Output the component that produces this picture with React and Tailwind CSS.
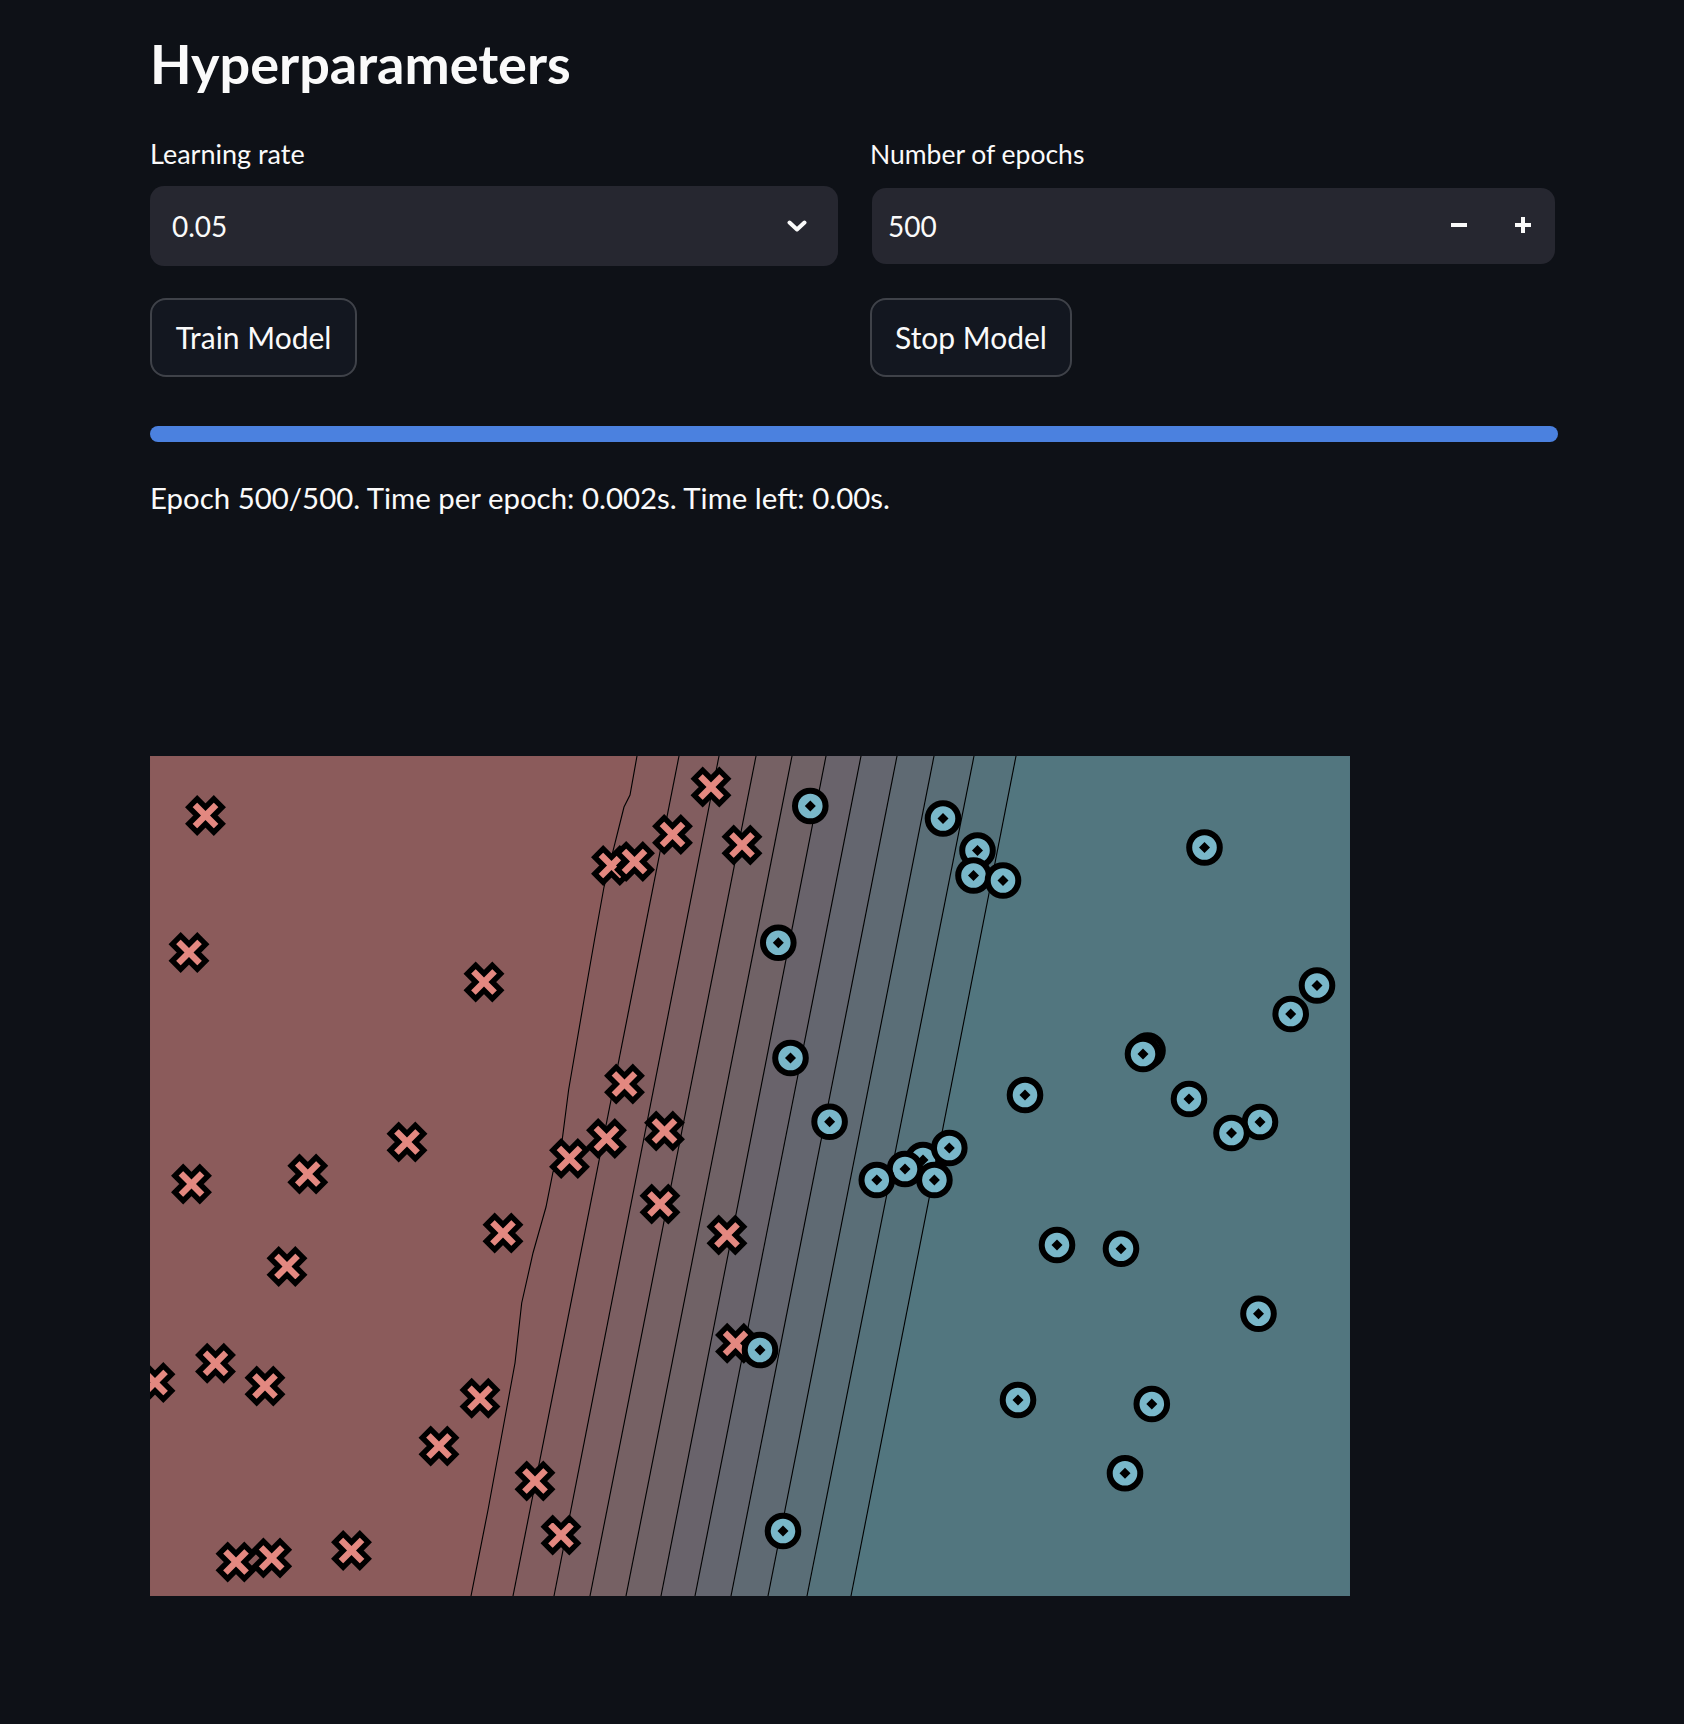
import React from "react";

const L1 = [[487,0],[480,39],[474,51],[454,131],[445,181],[434,244],[418.6,334],[409.6,404],[403,416],[396,451],[383,497],[371.7,547],[365,607],[354,667],[338,754],[321,840]];
const straight = [[529,363],[569,404],[606,440],[642,476],[676,511],[711,545],[747,581],[784,618],[824,657],[866,701]];
const LINES = [L1, ...straight.map(([t,b]) => [[t,0],[b,840]])];
const BAND = ['#8b5b5b','#875c5d','#825d5f','#7c5f62','#766164','#706266','#69636b','#64666f','#5f6a73','#5a6e77','#55727b','#52767f'];

const XS = [[55.5,59.5],[39,196.5],[334,226],[561,31],[522.5,78.5],[592,89],[461.5,109.5],[484.5,105.5],[474.5,328],[514.5,375],[456.5,382.5],[419.5,402.5],[257,386],[157.8,418],[41.5,428],[353,477],[510,448],[577,479],[137,510.5],[65.5,607.3],[115,630],[5,626.5],[330,642.3],[289,690],[385,725],[411,779],[585.5,587.3],[86,806],[121.7,802],[201.5,794.5]];
const OS = [[660.3,50],[793,62.5],[827.5,94.5],[823.5,119.5],[853,124.5],[1054.5,91.5],[628.3,186.7],[640.5,302],[1167,229.5],[1140.7,258],[997.5,294.5],[993,298],[875,339],[1039,343],[1110,366],[1081.5,377],[679.6,365.7],[773,404],[799.3,392],[755,413],[726.8,424],[784.4,424],[907,489],[971,492.7],[1108.5,557.7],[610,594],[868,644],[1001.8,648],[975,717.3],[633,775]];

const pts = (arr) => arr.map((p) => p.join(",")).join(" ");

function Plot() {
  const bands = [];
  for (let i = 0; i < 12; i++) {
    const left = i === 0 ? [[0,0],[0,840]] : LINES[i-1];
    const right = i === 11 ? [[1200,0],[1200,840]] : LINES[i];
    const poly = [...left, ...[...right].reverse()];
    bands.push(<polygon key={i} points={pts(poly)} fill={BAND[i]} stroke={BAND[i]} strokeWidth="0.6" />);
  }
  return (
    <svg width="1200" height="840" viewBox="0 0 1200 840" className="block">
      <rect x="0" y="0" width="1200" height="840" fill="#52767f" />
      {bands}
      {LINES.map((l, i) => (
        <polyline key={i} points={pts(l)} fill="none" stroke="#000" strokeWidth="1.1" />
      ))}
      {XS.map(([x, y], i) => (
        <path key={i} transform={`translate(${x} ${y}) scale(1.04)`} d="M8,-16 L16,-8 L8,0 L16,8 L8,16 L0,8 L-8,16 L-16,8 L-8,0 L-16,-8 L-8,-16 L0,-8 Z" fill="#e38880" stroke="#000" strokeWidth="5.2" strokeLinejoin="miter" />
      ))}
      {OS.map(([x, y], i) => (
        <g key={i} transform={`translate(${x} ${y})`}>
          <circle r="15.3" fill="#79b7c9" stroke="#000" strokeWidth="6" />
          <path d="M0,-5.5 L5.5,0 L0,5.5 L-5.5,0 Z" fill="#000" />
        </g>
      ))}
    </svg>
  );
}

export default function App() {
  return (
    <div className="min-h-screen bg-[#0e1117] text-[#fafafa] font-['Lato','Noto_Sans',sans-serif]">
      <div className="w-[1408px] ml-[150px] pt-[32px]">
        <h2 className="text-[54px] leading-[64px] font-bold">Hyperparameters</h2>
        <div className="grid grid-cols-2 gap-x-[32px] mt-[42px]">
          <div>
            <div className="text-[27px] leading-[32px]">Learning rate</div>
            <div className="mt-[16px] h-[80px] rounded-[14px] bg-[#262730] flex items-center justify-between pl-[22px] pr-[31px]">
              <span className="text-[28px]">0.05</span>
              <svg width="20" height="12" viewBox="0 0 20 12">
                <polyline points="2.5,2.5 10,9.5 17.5,2.5" fill="none" stroke="#fafafa" strokeWidth="4" strokeLinecap="round" strokeLinejoin="round" />
              </svg>
            </div>
          </div>
          <div>
            <div className="text-[26.5px] leading-[32px]">Number of epochs</div>
            <div className="mt-[18px] ml-[2px] mr-[3px] h-[76px] rounded-[14px] bg-[#262730] flex items-center pl-[16px]">
              <span className="text-[28px] flex-1">500</span>
              <div className="w-[64px] flex justify-center pb-[2px]">
                <div className="w-[16px] h-[4px] bg-[#fafafa]" />
              </div>
              <div className="w-[64px] flex justify-center pb-[2px]">
                <div className="w-[16px] h-[16px] relative">
                  <div className="absolute left-0 top-[6px] w-[16px] h-[4px] bg-[#fafafa]" />
                  <div className="absolute top-0 left-[6px] w-[4px] h-[16px] bg-[#fafafa]" />
                </div>
              </div>
            </div>
          </div>
        </div>
        <div className="grid grid-cols-2 gap-x-[32px] mt-[32px]">
          <div>
            <button className="w-[207px] h-[79px] rounded-[16px] border-2 border-[#3f4249] bg-[#131720] text-[30px] text-[#fafafa] flex items-center justify-center">Train Model</button>
          </div>
          <div>
            <button className="w-[202px] h-[79px] rounded-[16px] border-2 border-[#3f4249] bg-[#131720] text-[30px] text-[#fafafa] flex items-center justify-center">Stop Model</button>
          </div>
        </div>
        <div className="mt-[49px] h-[16px] rounded-full bg-[#4b81df]" />
        <p className="mt-[36px] text-[29.4px] leading-[40px]">Epoch 500/500. Time per epoch: 0.002s. Time left: 0.00s.</p>
        <div className="mt-[238px]">
          <Plot />
        </div>
      </div>
    </div>
  );
}
